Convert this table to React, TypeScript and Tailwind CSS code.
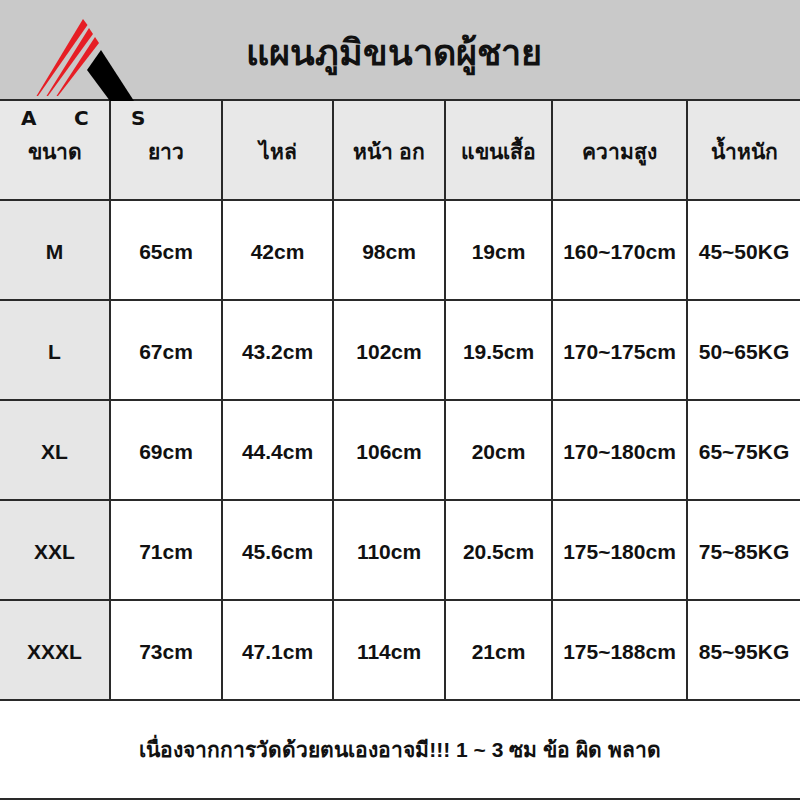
import React from "react";

const cols = ["ขนาด", "ยาว", "ไหล่", "หน้า อก", "แขนเสื้อ", "ความสูง", "น้ำหนัก"];
const rows = [
  ["M", "65cm", "42cm", "98cm", "19cm", "160~170cm", "45~50KG"],
  ["L", "67cm", "43.2cm", "102cm", "19.5cm", "170~175cm", "50~65KG"],
  ["XL", "69cm", "44.4cm", "106cm", "20cm", "170~180cm", "65~75KG"],
  ["XXL", "71cm", "45.6cm", "110cm", "20.5cm", "175~180cm", "75~85KG"],
  ["XXXL", "73cm", "47.1cm", "114cm", "21cm", "175~188cm", "85~95KG"],
];

const gridCols = "grid grid-cols-[109px_112px_111px_112px_107px_135px_114px]";

function Logo() {
  return (
    <svg className="absolute left-0 top-0" width="140" height="102" viewBox="0 0 140 102">
      <polygon points="83,19 87.5,25 38,96 36.5,96" fill="#e61e25" />
      <polygon points="89,28 93,34 48,96 46.5,96" fill="#e61e25" />
      <polygon points="95,37 99,43 58,96 56.5,96" fill="#e61e25" />
      <polygon points="101,50 134,101 110,101 87,70" fill="#000" />
    </svg>
  );
}

export default function App() {
  return (
    <div
      className="relative w-[800px] h-[800px] bg-white text-[#111] overflow-hidden"
      style={{ fontFamily: '"Liberation Sans", Arial, sans-serif' }}
    >
      <div className="h-[99px] bg-[#c9c9c9] flex items-center">
        <div className="pl-[246px] pt-[6px] text-[36px] font-bold">แผนภูมิขนาดผู้ชาย</div>
      </div>
      <div className={`${gridCols} border-t-2 border-[#2a2a2a]`}>
        {cols.map((c, i) => (
          <div
            key={c}
            className={`h-[100px] pt-[4px] bg-[#e8e8e8] flex items-center justify-center text-[21px] font-bold border-b-2 border-[#2a2a2a] ${i > 0 ? "border-l-2" : ""}`}
          >
            {c}
          </div>
        ))}
        {rows.map((r) =>
          r.map((v, i) => (
            <div
              key={r[0] + i}
              className={`h-[100px] pt-[4px] flex items-center justify-center text-[21px] font-bold border-b-2 border-[#2a2a2a] ${i > 0 ? "border-l-2 bg-white" : "bg-[#e6e6e6]"}`}
            >
              {v}
            </div>
          ))
        )}
      </div>
      <div className="h-[99px] border-b-2 border-[#2a2a2a] flex items-center justify-center text-[21px] font-bold">
        เนื่องจากการวัดด้วยตนเองอาจมี!!! 1 ~ 3 ซม ข้อ ผิด พลาด
      </div>
      <Logo />
      <div
        className="absolute left-[21px] top-[108px] flex text-[20px] font-bold leading-none"
        style={{ fontFamily: '"DejaVu Sans", sans-serif' }}
      >
        <span className="w-[53px]">A</span>
        <span className="w-[57px]">C</span>
        <span>S</span>
      </div>
    </div>
  );
}
